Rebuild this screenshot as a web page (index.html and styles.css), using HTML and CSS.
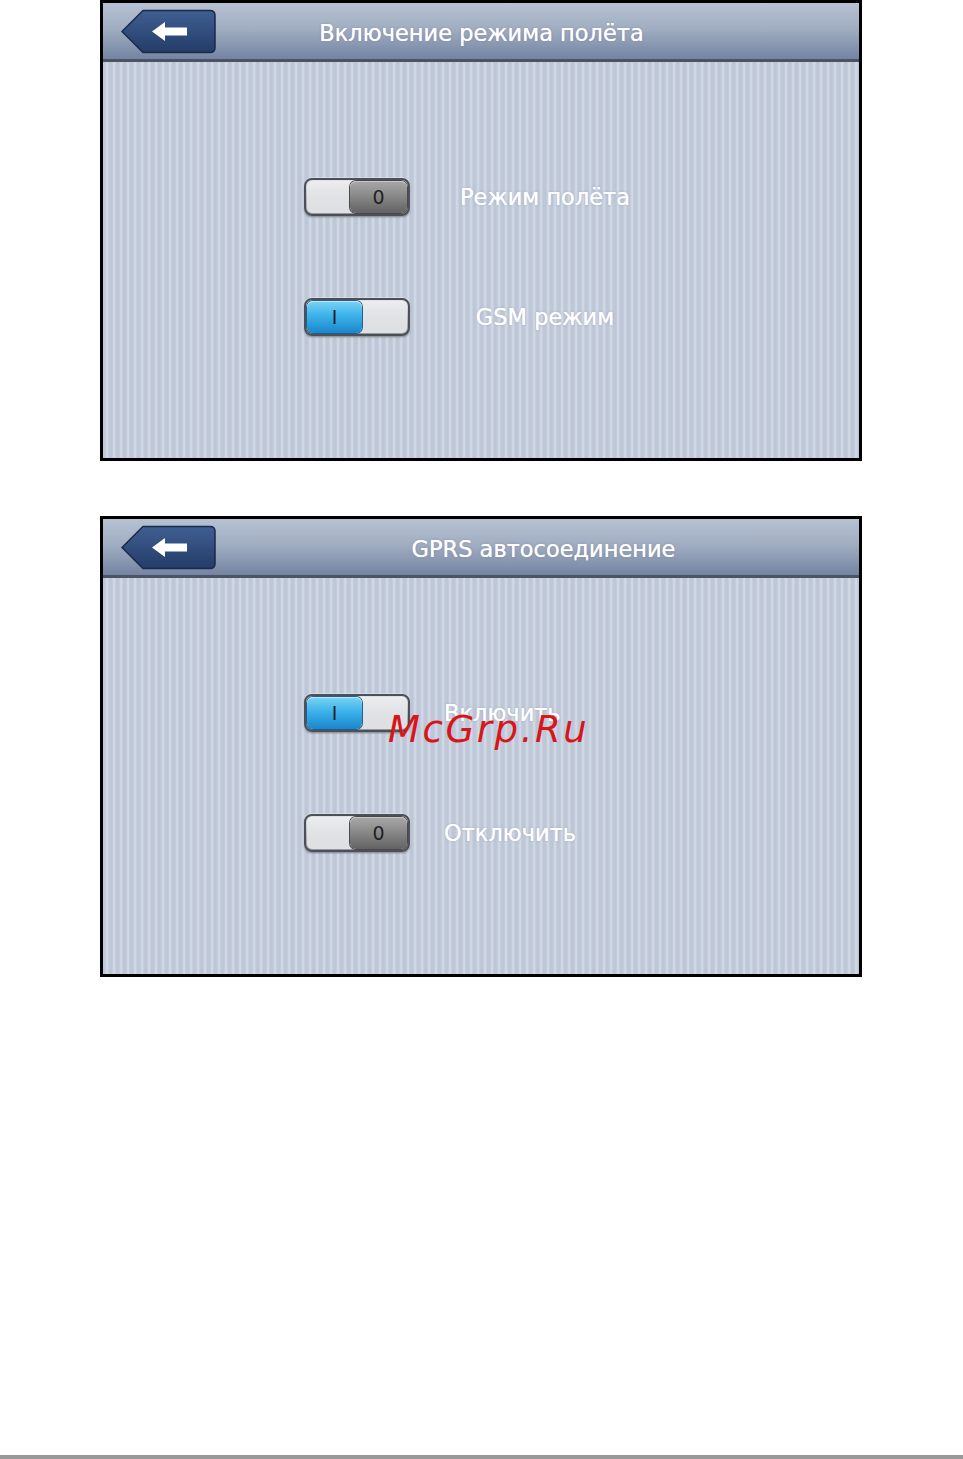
FILE: index.html
```html
<!DOCTYPE html>
<html lang="ru">
<head>
<meta charset="utf-8">
<title>Настройки связи</title>
<link rel="stylesheet" href="styles.css">
</head>
<body>
<div class="page">
  <section class="screen">
    <header class="bar">
      <button class="back" aria-label="Назад">
        <svg width="96" height="45" viewBox="0 0 96 45">
          <defs>
            <linearGradient id="bk1" x1="0" y1="0" x2="0" y2="1">
              <stop offset="0" stop-color="#3f5f92"/>
              <stop offset="1" stop-color="#243c68"/>
            </linearGradient>
          </defs>
          <path d="M1 22.5 L22 1.5 H89 Q94 1.5 94 6.5 V38.5 Q94 43.5 89 43.5 H22 Z" fill="url(#bk1)" stroke="#1a2a4a" stroke-width="1.5"/>
          <path d="M31 22.5 L44 13 V18.5 H66 V26.5 H44 V32 Z" fill="#fff"/>
        </svg>
      </button>
      <h1 class="title title-a">Включение режима полёта</h1>
    </header>
    <div class="body">
      <div class="row">
        <div class="toggle off"><span class="knob">0</span></div>
        <span class="label label-c">Режим полёта</span>
      </div>
      <div class="row">
        <div class="toggle on"><span class="knob">I</span></div>
        <span class="label label-c">GSM режим</span>
      </div>
    </div>
  </section>

  <section class="screen">
    <header class="bar">
      <button class="back" aria-label="Назад">
        <svg width="96" height="45" viewBox="0 0 96 45">
          <defs>
            <linearGradient id="bk2" x1="0" y1="0" x2="0" y2="1">
              <stop offset="0" stop-color="#3f5f92"/>
              <stop offset="1" stop-color="#243c68"/>
            </linearGradient>
          </defs>
          <path d="M1 22.5 L22 1.5 H89 Q94 1.5 94 6.5 V38.5 Q94 43.5 89 43.5 H22 Z" fill="url(#bk2)" stroke="#1a2a4a" stroke-width="1.5"/>
          <path d="M31 22.5 L44 13 V18.5 H66 V26.5 H44 V32 Z" fill="#fff"/>
        </svg>
      </button>
      <h1 class="title title-b">GPRS автосоединение</h1>
    </header>
    <div class="body">
      <div class="row">
        <div class="toggle on"><span class="knob">I</span></div>
        <span class="label label-l">Включить</span>
      </div>
      <div class="row">
        <div class="toggle off"><span class="knob">0</span></div>
        <span class="label label-l">Отключить</span>
      </div>
    </div>
    <span class="stamp">McGrp.Ru</span>
  </section>
</div>
<div class="rule"></div>
</body>
</html>
```

FILE: styles.css
```css
html, body {
  margin: 0;
  padding: 0;
  background: #fff;
}

.page {
  height: 1455px;
  padding-left: 100px;
  display: flex;
  flex-direction: column;
  gap: 55px;
}

.rule {
  height: 4px;
  background: #999;
}

.screen {
  position: relative;
  width: 756px;
  height: 455px;
  border: 3px solid #000;
  display: flex;
  flex-direction: column;
  font-family: "DejaVu Sans", Verdana, sans-serif;
}

.bar {
  height: 56px;
  border-bottom: 3px solid #4a5466;
  background: linear-gradient(#b6c2d2 0%, #a1aec2 45%, #7484a2 100%);
  display: flex;
  align-items: center;
}

.back {
  margin: 0 0 0 18px;
  padding: 0;
  border: 0;
  background: none;
  width: 96px;
  height: 45px;
  display: block;
}

.back svg {
  display: block;
}

.title {
  flex: 1;
  margin: 0;
  padding-top: 4px;
  font-size: 22.5px;
  font-weight: normal;
  color: #fff;
  text-align: center;
  text-shadow: 0 0 1px #fff, 0 0 2px rgba(60, 70, 100, 0.6);
}

.title-a {
  padding-right: 113px;
}

.title-b {
  padding-left: 11px;
}

/* striped panel behind the switches */
.body {
  flex: 1;
  background-color: #c0c8d9;
  background-image: repeating-linear-gradient(90deg,
    #bec6d8 0px, #bec6d8 2px, #c9d3e0 3px, #d0dce5 4px, #cbd6e2 5px, #bec6d8 6px, #bec6d8 7px);
  padding: 116px 0 0 201px;
  display: flex;
  flex-direction: column;
  gap: 82px;
}

.row {
  display: flex;
  align-items: center;
  height: 38px;
}

.toggle {
  box-sizing: border-box;
  width: 106px;
  height: 38px;
  border-radius: 8px;
  border: 2px solid #4c5058;
  padding: 1px;
  background:
    linear-gradient(rgba(255, 255, 255, 0.45), rgba(255, 255, 255, 0.7)) content-box,
    linear-gradient(#e4e6ea, #8e929a) border-box;
  box-shadow: 0 1px 2px rgba(0, 0, 0, 0.45), 0 0 0 1px rgba(230, 232, 236, 0.7);
  display: flex;
}

.toggle .knob {
  box-sizing: border-box;
  width: 57px;
  height: 100%;
  border-radius: 6px;
  font-size: 19px;
  color: #222;
  display: flex;
  align-items: center;
  justify-content: center;
  line-height: 1;
}

.toggle.off {
  justify-content: flex-end;
}

.toggle.on {
  justify-content: flex-start;
}

.toggle.off .knob {
  background: linear-gradient(#a8a8a8 0%, #8a8a8a 45%, #626262 100%);
  box-shadow: inset 0 1px 0 rgba(255, 255, 255, 0.35), 0 0 0 1px #4a4a4a;
}

.toggle.on .knob {
  width: 55px;
  background: linear-gradient(#7ad4f4 0%, #3cb2ea 45%, #1a86cc 100%);
  box-shadow: inset 0 1px 0 rgba(255, 255, 255, 0.5), 0 0 0 1px #2a5c86;
}

.label {
  font-size: 22.5px;
  color: #fff;
  text-shadow: 0 0 1px #fff, 0 0 2px rgba(90, 100, 130, 0.5);
  white-space: nowrap;
}

.label-c {
  width: 210px;
  margin-left: 30px;
  text-align: center;
}

.label-l {
  margin-left: 34px;
}

.stamp {
  position: absolute;
  left: 285px;
  top: 189px;
  font-family: "DejaVu Sans", Verdana, sans-serif;
  font-style: italic;
  font-size: 37px;
  letter-spacing: 2.6px;
  color: #d8161a;
}
```
